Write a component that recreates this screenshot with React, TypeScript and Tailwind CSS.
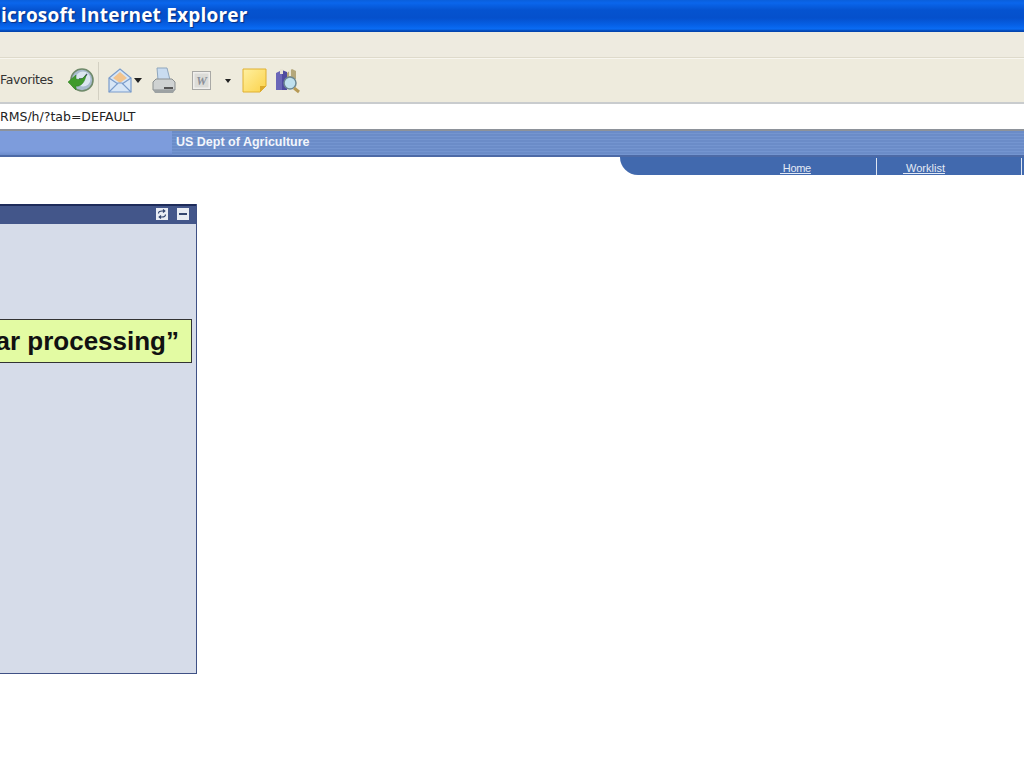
export default function App() {
  return (
    <div className="w-[1024px] h-[768px] overflow-hidden bg-white flex flex-col font-['Liberation_Sans',sans-serif]">
      {/* Title bar */}
      <div className="h-[32px] shrink-0 flex items-center overflow-hidden bg-[linear-gradient(to_bottom,#0a5fdc_0px,#0a66ec_3px,#0553d0_10px,#0550cc_18px,#0660e6_25px,#0a6cf4_29px,#0345b0_31px)]">
        <span className="ml-[-17px] mt-[-2px] whitespace-nowrap text-white font-bold text-[19px] tracking-[0.2px] font-['Open_Sans',sans-serif] [text-shadow:1px_1px_1px_#0a2f80]">
          Microsoft Internet Explorer
        </span>
      </div>
      {/* Menu bar */}
      <div className="h-[26px] shrink-0 bg-[#eeebe0] border-b border-[#dedacb]" />
      {/* Toolbar */}
      <div className="h-[46px] shrink-0 bg-[#eeebdd] border-t border-[#f8f6ef] border-b-2 border-b-[#c9ccce] flex items-center overflow-hidden">
        <span className="ml-0 whitespace-nowrap text-[12.5px] text-[#333] font-['DejaVu_Sans',sans-serif] tracking-[-0.4px]">Favorites</span>
        <svg className="ml-[14px] shrink-0" width="28" height="28" viewBox="0 0 28 28">
          <circle cx="15" cy="13" r="11" fill="#a9bccf" stroke="#6f8a6a" strokeWidth="1.6" />
          <circle cx="16" cy="12" r="7.5" fill="#dbe6f0" />
          <path d="M16 12l4-5M16 12h-4" stroke="#456" strokeWidth="1.3" />
          <path d="M1 15l8-7v4c4 1 7 0 10-4-1 7-5 12-10 11v4z" fill="#3f9a2c" stroke="#2b7a1e" strokeWidth="0.5" />
        </svg>
        <div className="ml-[3px] w-[1px] h-[38px] bg-[#d3d0c2] shrink-0" />
        <svg className="ml-[9px] shrink-0" width="25" height="28" viewBox="0 0 25 28">
          <path d="M1 11L12 2l11 9v14H1z" fill="#d7e6f6" stroke="#7a9ccb" strokeWidth="1.2" />
          <path d="M5 11l7-6 7 6-7 5z" fill="#f3c48d" />
          <path d="M1 25l9-9h4l9 9M1 11l9 6M23 11l-9 6" fill="none" stroke="#7a9ccb" strokeWidth="1.2" />
        </svg>
        <svg className="ml-[1px] shrink-0" width="8" height="5" viewBox="0 0 8 5"><path d="M0 0h8L4 5z" fill="#222" /></svg>
        <svg className="ml-[9px] shrink-0" width="26" height="28" viewBox="0 0 26 28">
          <path d="M6 1h10l3 12H7z" fill="#c9dcf0" stroke="#8fa6bd" />
          <path d="M2 15l3-3h16l3 3v8H2z" fill="#cfd2d2" stroke="#8a8f90" />
          <path d="M2 23h22l-2 3H4z" fill="#9da2a3" />
          <path d="M13 21h9" stroke="#555" strokeWidth="2" />
        </svg>
        <svg className="ml-[15px] shrink-0" width="19" height="19" viewBox="0 0 19 19">
          <rect x="0.5" y="0.5" width="18" height="18" fill="#f0efec" stroke="#a9a9a6" />
          <rect x="2.500" y="2.500" width="14" height="14" fill="#dcdcd8" />
          <text x="9.5" y="14" textAnchor="middle" fontSize="12" fontWeight="700" fontStyle="italic" fill="#8b8f98" fontFamily="Liberation Serif, serif">W</text>
        </svg>
        <svg className="ml-[14px] shrink-0" width="6" height="4" viewBox="0 0 6 4"><path d="M0 0h6L3 4z" fill="#222" /></svg>
        <svg className="ml-[11px] shrink-0" width="25" height="25" viewBox="0 0 25 25">
          <defs>
            <linearGradient id="note" x1="0" y1="0" x2="1" y2="1">
              <stop offset="0" stopColor="#fff0a0" />
              <stop offset="1" stopColor="#fbd24a" />
            </linearGradient>
          </defs>
          <path d="M1 1h23v17l-6 6H1z" fill="url(#note)" stroke="#e0b030" />
          <path d="M24 18h-6v6z" fill="#dba92c" />
        </svg>
        <svg className="ml-[8px] shrink-0" width="25" height="28" viewBox="0 0 25 28">
          <path d="M1 6l6-3v20H1z" fill="#6a66b8" />
          <path d="M7 3l5 2v18H7z" fill="#4f4ba0" />
          <path d="M12 6l5-4 4 2v8h-9z" fill="#b4a77a" />
          <path d="M5 2h3v5H5zM14 3h2v6h-2z" fill="#e8e4d5" />
          <circle cx="15" cy="16" r="6" fill="#bfe0ee" stroke="#6c8792" strokeWidth="1.5" />
          <path d="M19 21l5 4" stroke="#b79a55" strokeWidth="3" />
        </svg>
      </div>
      {/* Address bar */}
      <div className="h-[27px] shrink-0 bg-white flex items-center overflow-hidden border-b-2 border-b-[#8d929a]">
        <span className="ml-0 mt-[2px] whitespace-nowrap text-[12.5px] text-[#222] font-['DejaVu_Sans',sans-serif] tracking-[0px]">RMS/h/?tab=DEFAULT</span>
      </div>
      {/* Banner */}
      <div className="h-[26px] shrink-0 flex bg-[repeating-linear-gradient(to_bottom,#6b8cc8_0px,#6b8cc8_2px,#7495d0_2px,#7495d0_3px)] border-b-2 border-b-[#4d6aa6]">
        <div className="w-[172px] bg-[linear-gradient(to_bottom,#7d9cdc_0px,#7d9cdc_20px,#6b8ccc_24px)]" />
        <span className="ml-[4px] mt-[4px] text-[12.5px] leading-[14px] font-bold text-[#f2f5fb]">US Dept of Agriculture</span>
      </div>
      {/* Nav */}
      <div className="h-[18px] shrink-0 flex justify-end">
        <div className="w-[404px] h-[18px] bg-[#4169ae] rounded-bl-[22px] flex items-end text-[11px] leading-[14px] text-[#e4eaf5]">
          <a className="ml-[160px] underline tracking-[-0.3px] w-[96px]">&nbsp;Home</a>
          <div className="w-[1px] h-[17px] bg-[#dfe6f2]" />
          <a className="ml-[26px] underline w-[118px]">&nbsp;Worklist</a>
          <div className="w-[1px] h-[17px] bg-[#dfe6f2]" />
        </div>
      </div>
      {/* Panel */}
      <div className="mt-[29px] w-[197px] h-[470px] shrink-0 flex flex-col bg-[#d6dce9] border-r border-b border-r-[#3f5185] border-b-[#3f5185]">
        <div className="h-[20px] shrink-0 bg-[#43568a] border-t-2 border-t-[#1e2c5a] flex items-center justify-end gap-[9px] pr-[7px]">
          <div className="w-[12px] h-[12px] mt-[-2px] bg-[#e8ecf4] flex items-center justify-center">
            <svg width="10" height="10" viewBox="0 0 10 10" fill="none" stroke="#33456f" strokeWidth="1.2">
              <path d="M1.500 4.500C1.500 2.500 3 2 5 2h2.500M6 0.500L7.800 2 6 3.500M8.500 5.500C8.500 7.500 7 8 5 8H2.500M4 6.500L2.200 8 4 9.500" />
            </svg>
          </div>
          <div className="w-[12px] h-[12px] mt-[-2px] bg-[#e8ecf4] flex items-center justify-center">
            <div className="w-[8px] h-[2px] bg-[#33456f]" />
          </div>
        </div>
        <div className="mt-[95px] w-[192px] h-[44px] bg-[#e3fba3] border border-[#333] border-l-0 flex items-center justify-end pr-[12px] overflow-hidden">
          <span className="whitespace-nowrap font-bold text-[26px] leading-[30px] text-[#111]">ar processing”</span>
        </div>
      </div>
    </div>
  );
}
